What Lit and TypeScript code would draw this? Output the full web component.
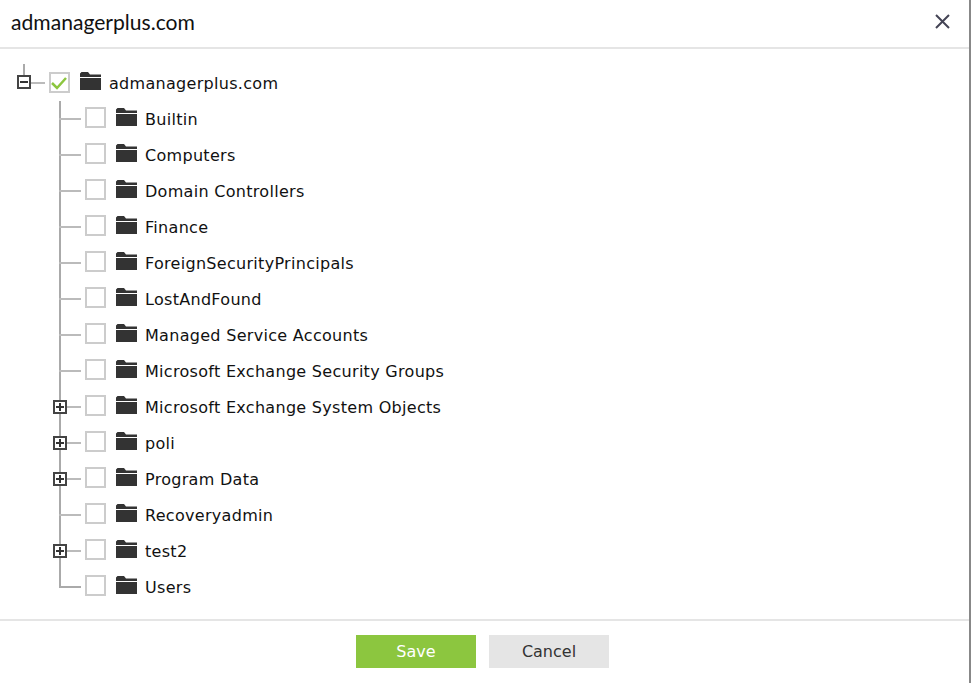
import { LitElement, html, css, svg } from "lit";
import { customElement } from "lit/decorators.js";

const folder = html`<svg class="folder" width="21" height="18" viewBox="0 0 21 18"><path fill="#333" d="M0 1.500 1.500 0H8l2 2.500h11V5H0ZM0 6h21v12H0Z"/></svg>`;
const check = svg`<path d="M3 11 8 16 17 6" fill="none" stroke="#8cc63f" stroke-width="2.500"/>`;
const items: [string, boolean][] = [
  ["Builtin", false], ["Computers", false], ["Domain Controllers", false], ["Finance", false],
  ["ForeignSecurityPrincipals", false], ["LostAndFound", false], ["Managed Service Accounts", false],
  ["Microsoft Exchange Security Groups", false], ["Microsoft Exchange System Objects", true],
  ["poli", true], ["Program Data", true], ["Recoveryadmin", false], ["test2", true], ["Users", false],
];

@customElement("app-root")
export class AppRoot extends LitElement {
  static styles = css`
    :host { display: block; width: 971px; height: 683px; background: #fff; position: relative; overflow: hidden; font-family: "DejaVu Sans", sans-serif; }
    .dialog { display: flex; flex-direction: column; width: 969px; height: 683px; border-right: 2px solid #888; }
    .header { height: 43px; flex: none; display: flex; align-items: center; justify-content: space-between; padding: 0 19px 4px 11px; border-bottom: 2px solid #e5e5e5; }
    .title { font: 21.1px "Lato", sans-serif; color: #111; }
    .close { display: block; }
    .tree { flex: 1; padding-top: 16px; }
    .row { height: 36px; display: flex; align-items: center; position: relative; color: #111; font-size: 16px; letter-spacing: 0.3px; }
    .root { padding-left: 49px; }
    .child { padding-left: 85px; }
    .box { width: 21px; height: 21px; box-sizing: border-box; border: 2px solid #ccc; flex: none; display: block; margin-bottom: 3px; }
    .root .box { margin-bottom: 1px; }
    .box svg { display: block; margin: -2px; }
    .folder { margin: 0 8px 4px 10px; flex: none; }
    .v { position: absolute; left: 59px; top: 0; bottom: 0; width: 2px; background: #aaa; }
    .last .v { bottom: 17px; }
    .h { position: absolute; left: 59px; top: 17px; width: 22px; height: 2px; background: #bbb; }
    .last .h { background: #aaa; }
    .exp { position: absolute; left: 53px; top: 11px; width: 14px; height: 14px; box-sizing: border-box; border: 2px solid #444; background: #fff; }
    .exp::before { content: ""; position: absolute; left: 1px; right: 1px; top: 4px; height: 2px; background: #333; }
    .exp.plus::after { content: ""; position: absolute; top: 1px; bottom: 1px; left: 4px; width: 2px; background: #333; }
    .rv { position: absolute; left: 23px; top: -1px; width: 2px; height: 11px; background: #aaa; }
    .rh { position: absolute; left: 31px; top: 17px; width: 14px; height: 2px; background: #bbb; }
    .root .exp { left: 17px; top: 10px; }
    .footer { height: 64px; flex: none; border-top: 2px solid #e5e5e5; display: flex; justify-content: center; gap: 13px; padding: 14px 4px 0 0; box-sizing: border-box; }
    button { width: 120px; height: 33px; border: 0; padding: 0; font: 16px "DejaVu Sans", sans-serif; }
    .save { background: #8cc63f; color: #fff; }
    .cancel { background: #e5e5e5; color: #333; }
  `;
  render() {
    return html`<div class="dialog">
      <div class="header"><span class="title">admanagerplus.com</span>
        <svg class="close" width="15" height="15" viewBox="0 0 15 15"><path d="M1 1 14 14M14 1 1 14" stroke="#445" stroke-width="2" fill="none"/></svg></div>
      <div class="tree">
        <div class="row root"><i class="rv"></i><i class="rh"></i><i class="exp"></i>
          <span class="box"><svg width="21" height="21">${check}</svg></span>${folder}<span>admanagerplus.com</span></div>
        ${items.map(([n, p], i) => html`<div class="row child ${i === items.length - 1 ? "last" : ""}">
          <i class="v"></i><i class="h"></i>${p ? html`<i class="exp plus"></i>` : ""}
          <span class="box"></span>${folder}<span>${n}</span></div>`)}
      </div>
      <div class="footer"><button class="save">Save</button><button class="cancel">Cancel</button></div>
    </div>`;
  }
}
